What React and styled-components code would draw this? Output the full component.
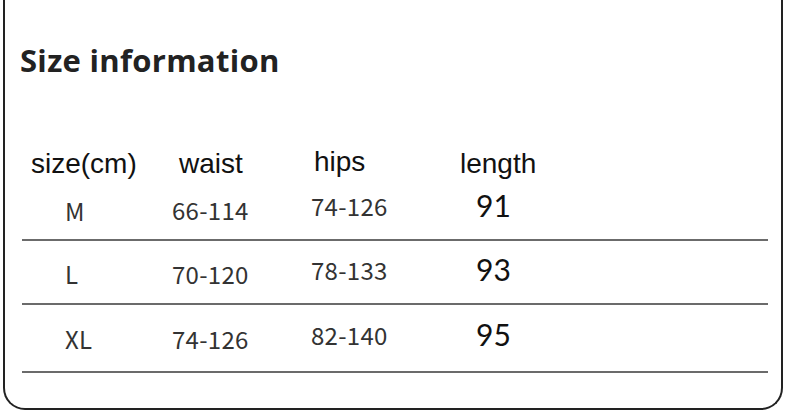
import React from "react";
import styled, { createGlobalStyle } from "styled-components";

const GlobalStyle = createGlobalStyle`
  html, body {
    margin: 0;
    padding: 0;
    background: #ffffff;
  }
  body {
    width: 790px;
    height: 416px;
    overflow: hidden;
  }
`;

const rows = [
  { size: "M", waist: "66-114", hips: "74-126", length: "91", height: 63, pad: 16 },
  { size: "L", waist: "70-120", hips: "78-133", length: "93", height: 62, pad: 16 },
  { size: "XL", waist: "74-126", hips: "82-140", length: "95", height: 66, pad: 19 },
];

export default function App() {
  return (
    <>
      <GlobalStyle />
      <Frame>
        <Title>Size information</Title>
        <Table>
          <HeadRow>
            <HeadCell>size(cm)</HeadCell>
            <HeadCell>waist</HeadCell>
            <HeadCell $raise={2}>hips</HeadCell>
            <HeadCell>length</HeadCell>
          </HeadRow>
          {rows.map((row) => (
            <BodyRow key={row.size} $height={row.height} $pad={row.pad}>
              <Cell $raise={row.size === "M" ? 0 : 1}>{row.size}</Cell>
              <Cell $raise={1}>{row.waist}</Cell>
              <Cell $raise={5}>{row.hips}</Cell>
              <Length>{row.length}</Length>
            </BodyRow>
          ))}
        </Table>
      </Frame>
    </>
  );
}

const Frame = styled.div`
  box-sizing: border-box;
  margin-left: 3px;
  width: 780px;
  height: 410px;
  border: 2px solid #222;
  border-top: none;
  border-radius: 0 0 22px 22px;
  padding-left: 15px;
`;

const Title = styled.h1`
  margin: 0;
  padding-top: 45px;
  font-family: "Open Sans", "Noto Sans", sans-serif;
  font-weight: 700;
  font-size: 31px;
  line-height: 31px;
  color: #222;
  letter-spacing: 0.3px;
`;

const Table = styled.div`
  margin-top: 72px;
  margin-left: 2px;
  width: 746px;
`;

const HeadRow = styled.div`
  display: grid;
  grid-template-columns: 148px 135px 146px 1fr;
  align-items: end;
  padding-left: 9px;
  height: 28px;
`;

const HeadCell = styled.div`
  font-family: "Liberation Sans", Arial, sans-serif;
  font-size: 28px;
  line-height: 28px;
  color: #111;
  padding-bottom: ${(p) => p.$raise || 0}px;
`;

const BodyRow = styled.div`
  box-sizing: content-box;
  display: grid;
  grid-template-columns: 107px 139px 165px 1fr;
  align-items: end;
  padding-left: 43px;
  height: ${(p) => p.$height - p.$pad}px;
  padding-bottom: ${(p) => p.$pad}px;
  border-bottom: 2px solid #6b6b6b;
`;

const Cell = styled.div`
  font-family: "Noto Sans CJK SC", "Noto Sans", sans-serif;
  font-weight: 400;
  font-size: 24px;
  line-height: 24px;
  color: #333;
  letter-spacing: 0.3px;
  padding-bottom: ${(p) => p.$raise || 0}px;
`;

const Length = styled.div`
  font-family: Lato, "Noto Sans", sans-serif;
  font-size: 30px;
  line-height: 30px;
  color: #111;
  padding-bottom: 3px;
`;
